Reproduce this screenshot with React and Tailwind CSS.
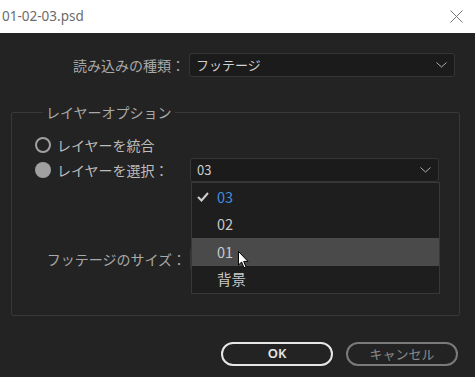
import React from 'react';

const jp = { fontFamily: '"Noto Sans CJK JP", "Noto Sans", sans-serif' };

const Chevron = () => (
  <svg width="11" height="6" viewBox="0 0 11 6" className="shrink-0">
    <polyline points="0.5,0.5 5.5,5 10.5,0.5" fill="none" stroke="#b0b0b0" strokeWidth="1" />
  </svg>
);

const Select = ({ value, className }) => (
  <div className={`flex items-center justify-between h-[24px] bg-[#1b1b1b] border border-[#353535] rounded-[3px] pl-[6px] pr-[7px] ${className}`}>
    <span className="text-[13px] text-[#cfcfcf]">{value}</span>
    <Chevron />
  </div>
);

const items = ['03', '02', '01', '背景'];

export default function App() {
  return (
    <div className="w-[475px] h-[377px] bg-[#232323] flex flex-col overflow-hidden" style={jp}>
      {/* title bar */}
      <div className="h-[33px] bg-white flex items-center justify-between pl-[2px] pr-[12px] shrink-0">
        <span className="text-[13.5px] text-[#6b6b6b]" style={{ fontFamily: '"Noto Sans", sans-serif' }}>01-02-03.psd</span>
        <svg width="13" height="13" viewBox="0 0 13 13">
          <path d="M0.5 0.5 L12.5 12.5 M12.5 0.5 L0.5 12.5" stroke="#777" strokeWidth="1" />
        </svg>
      </div>

      {/* import kind */}
      <div className="flex items-center mt-[20px] h-[24px]">
        <span className="w-[185px] text-right text-[14px] text-[#a9a9a9]">読み込みの種類：</span>
        <Select value="フッテージ" className="ml-[4px] w-[266px]" />
      </div>

      {/* layer options */}
      <fieldset className="relative mt-[27px] mx-[11px] w-[449px] border border-[#383838] rounded-[2px] pl-[23px] pb-[44px]">
        <legend className="ml-[8px] px-[3px] text-[14px] leading-[16px] text-[#a9a9a9]">レイヤーオプション</legend>

        <div className="flex items-center h-[24px] mt-[13px]">
          <span className="w-[16px] h-[16px] rounded-full border-[2.5px] border-[#a0a0a0]" />
          <span className="ml-[6px] text-[14px] text-[#bdbdbd]">レイヤーを統合</span>
        </div>

        <div className="flex items-center h-[24px] mt-[1px]">
          <span className="w-[16px] h-[16px] rounded-full bg-[#a0a0a0]" />
          <span className="ml-[6px] w-[133px] text-[14px] text-[#bdbdbd]">レイヤーを選択：</span>
          <Select value="03" className="w-[249px]" />
        </div>

        <div className="flex items-center h-[24px] mt-[65px] -ml-[23px]">
          <span className="w-[174px] text-right text-[14px] text-[#a9a9a9]">フッテージのサイズ：</span>
          <Select value="" className="ml-[4px] w-[249px]" />
        </div>

        {/* open menu */}
        <div className="absolute left-[179px] top-[62px] w-[249px] bg-[#1e1e1e] border border-[#383838] flex flex-col">
          {items.map((t, i) => (
            <div
              key={t}
              className={`relative h-[27.5px] flex items-center pl-[25px] text-[14.5px] ${i === 2 ? 'bg-[#4a4a4a]' : ''} ${i === 0 ? 'text-[#3d8fe0]' : 'text-[#c9c9c9]'}`}
            >
              {i === 0 && (
                <svg width="12" height="10" viewBox="0 0 12 10" className="absolute left-[5px]">
                  <polyline points="1,5 4.5,8.5 11,1" fill="none" stroke="#d0d0d0" strokeWidth="2" />
                </svg>
              )}
              {t}
            </div>
          ))}
          {/* mouse pointer */}
          <svg width="12" height="18" viewBox="0 0 12 18" className="absolute left-[46px] top-[68px]">
            <path d="M0.5 0.5 L0.5 14 L3.6 11 L6 16.8 L8 15.9 L5.7 10.4 L10 10.4 Z" fill="#ffffff" stroke="#000" strokeWidth="1" />
          </svg>
        </div>
      </fieldset>

      {/* buttons */}
      <div className="flex mt-[26px] ml-[221px] gap-[13px]">
        <button className="w-[112px] h-[24px] rounded-full border-2 border-[#e6e6e6] text-[13px] font-semibold text-[#e6e6e6] flex items-center justify-center" style={{ fontFamily: '"Noto Sans", sans-serif' }}>OK</button>
        <button className="w-[112px] h-[24px] rounded-full border-2 border-[#7a7a7a] text-[13px] text-[#8a8a8a] flex items-center justify-center">キャンセル</button>
      </div>
    </div>
  );
}
